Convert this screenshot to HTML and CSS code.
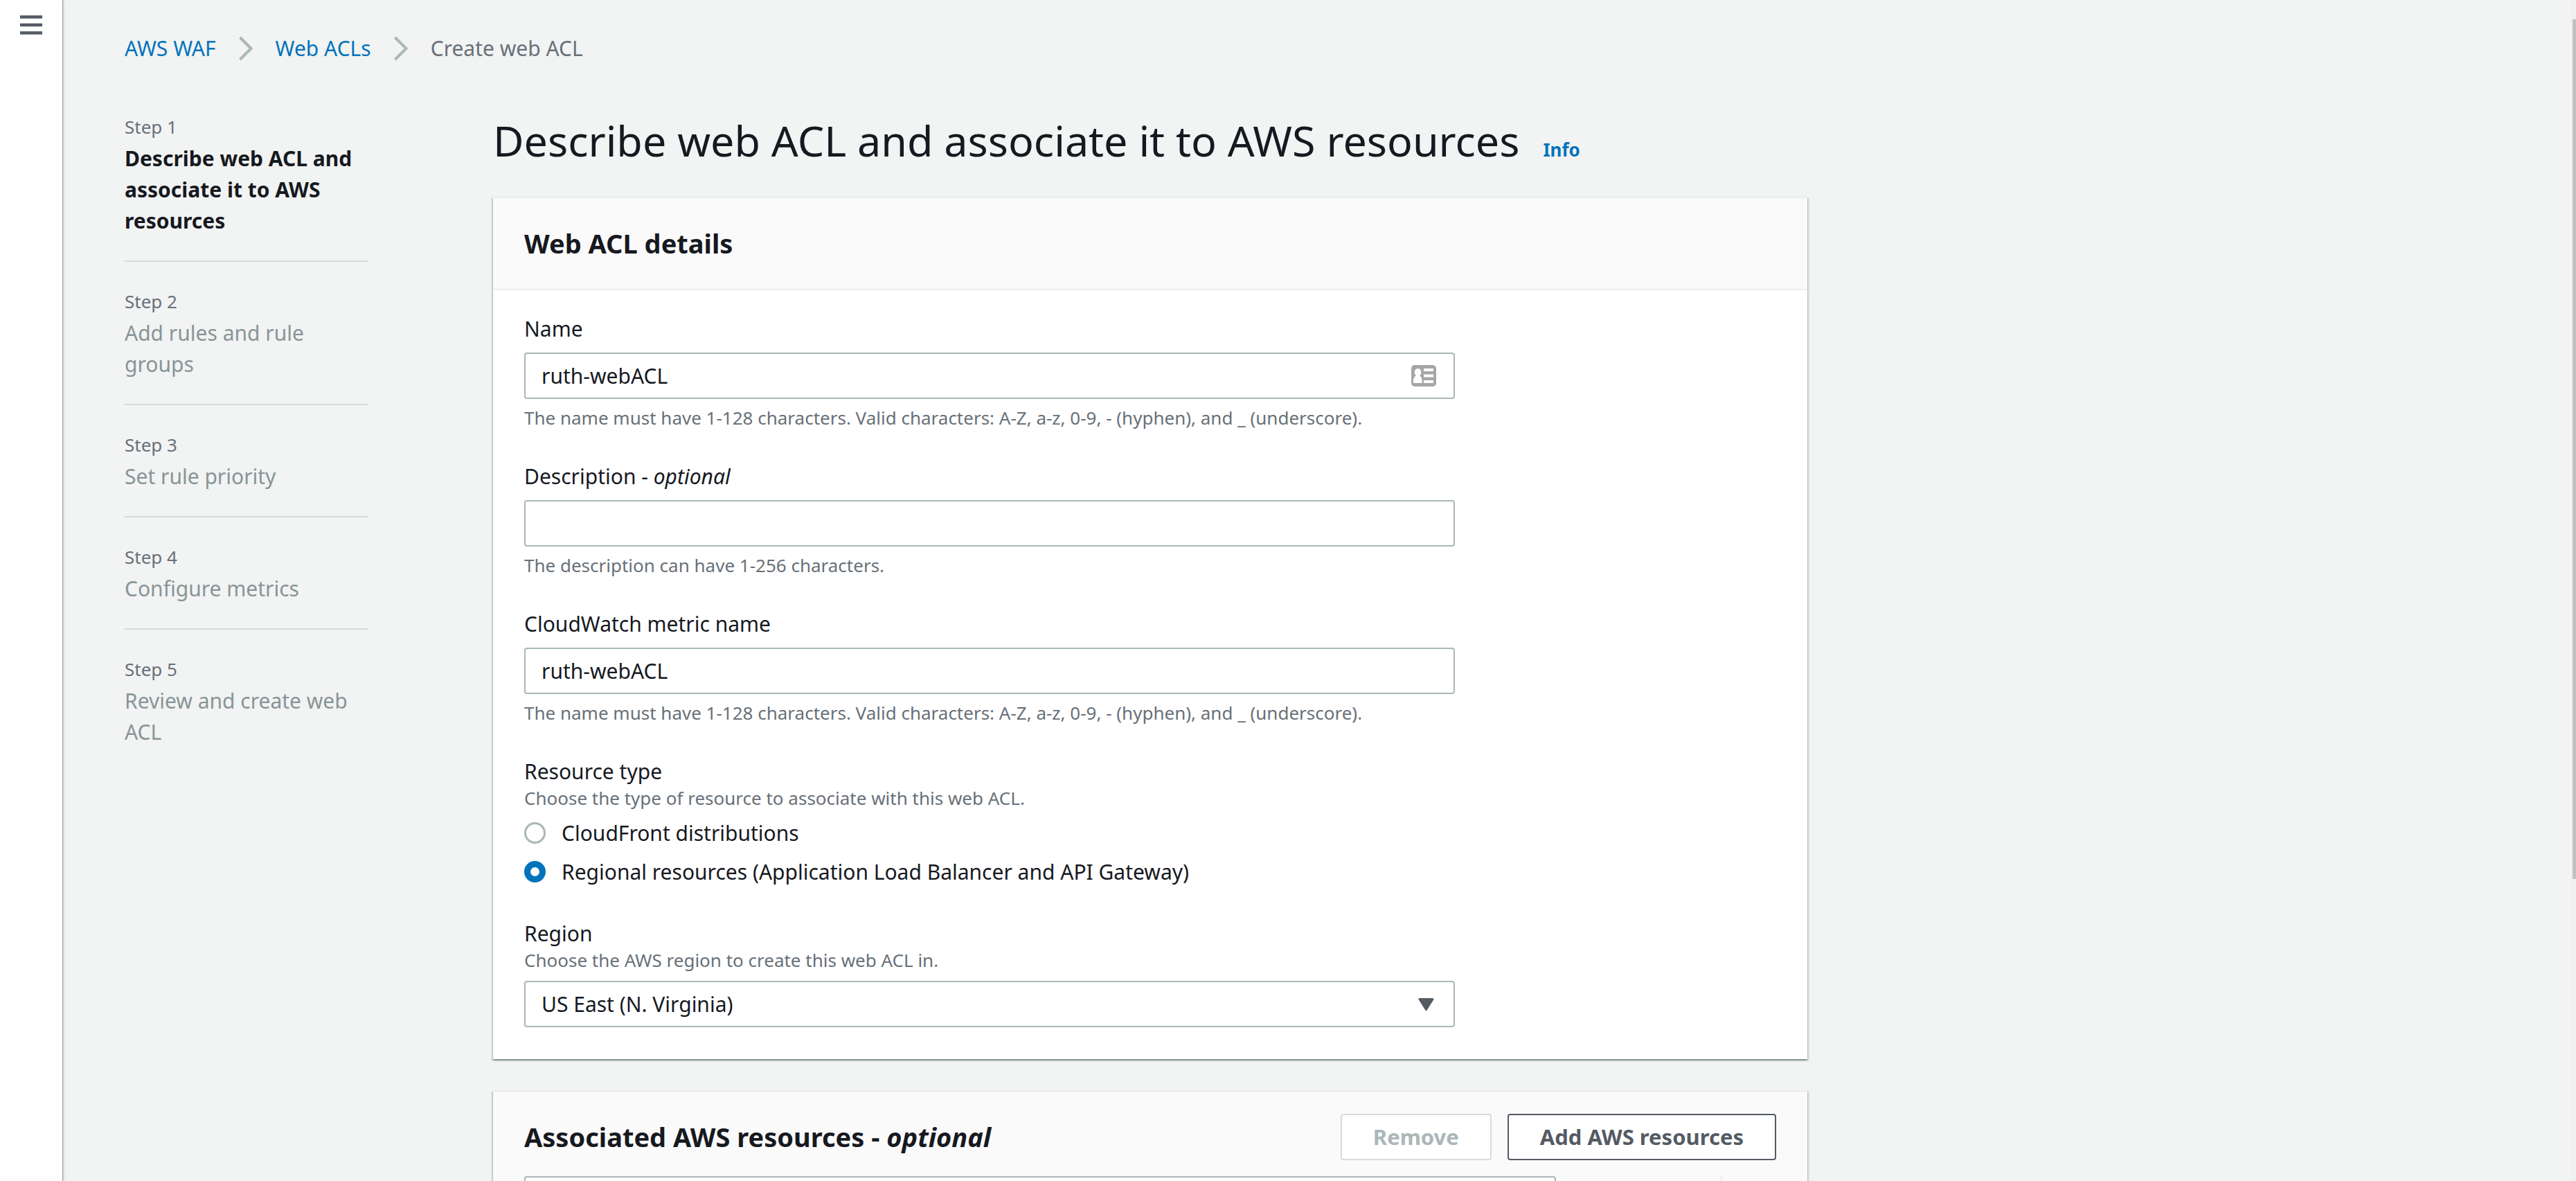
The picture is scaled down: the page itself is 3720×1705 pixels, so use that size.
FILE: index.html
```html
<!DOCTYPE html>
<html lang="en">
<head>
<meta charset="utf-8">
<title>Create web ACL</title>
<link rel="stylesheet" href="styles.css">
</head>
<body>
<div class="app">
  <aside class="rail">
    <button class="menu-button" type="button" aria-label="Open navigation">
      <svg width="32" height="30" viewBox="0 0 32 30" aria-hidden="true"><path d="M0 3.500h32M0 15h32M0 26.500h32" stroke="#545b64" stroke-width="4.6"/></svg>
    </button>
  </aside>

  <div class="content">
    <nav class="breadcrumb" aria-label="Breadcrumb">
      <a href="#">AWS WAF</a>
      <svg class="chevron" width="22" height="36" viewBox="0 0 22 36" aria-hidden="true"><path d="M2.500 2L18.500 18L2.500 34"/></svg>
      <a href="#">Web ACLs</a>
      <svg class="chevron" width="22" height="36" viewBox="0 0 22 36" aria-hidden="true"><path d="M2.500 2L18.500 18L2.500 34"/></svg>
      <span>Create web ACL</span>
    </nav>

    <div class="columns">
      <ol class="steps">
        <li class="step step-active"><span class="step-label">Step 1</span><span class="step-title">Describe web ACL and associate it to AWS resources</span></li>
        <li class="step"><span class="step-label">Step 2</span><span class="step-title">Add rules and rule groups</span></li>
        <li class="step"><span class="step-label">Step 3</span><span class="step-title">Set rule priority</span></li>
        <li class="step"><span class="step-label">Step 4</span><span class="step-title">Configure metrics</span></li>
        <li class="step"><span class="step-label">Step 5</span><span class="step-title">Review and create web ACL</span></li>
      </ol>

      <main class="main">
        <header class="page-header">
          <h1>Describe web ACL and associate it to AWS resources</h1>
          <a class="info" href="#">Info</a>
        </header>

        <section class="card">
          <div class="card-header"><h2>Web ACL details</h2></div>
          <form class="card-body">
            <div class="field">
              <label class="label" for="name">Name</label>
              <div class="control">
                <input class="input" id="name" type="text" value="ruth-webACL">
                <svg class="contact-icon" width="36" height="31" viewBox="0 0 36 31" aria-hidden="true">
                  <rect width="36" height="31" rx="5" fill="#a6a6a6"/>
                  <ellipse cx="9.500" cy="10.500" rx="4.800" ry="5.500" fill="#fff"/>
                  <path d="M3 26v-3c0-4 2-7 4.500-8h4c2.500 1 4 4 4 8v3z" fill="#fff"/>
                  <path d="M18 7h14M18 15.500h14M18 24h14" stroke="#fff" stroke-width="4"/>
                </svg>
              </div>
              <p class="hint">The name must have 1-128 characters. Valid characters: A-Z, a-z, 0-9, - (hyphen), and _ (underscore).</p>
            </div>
            <div class="field">
              <label class="label" for="description">Description - <i>optional</i></label>
              <div class="control"><input class="input" id="description" type="text"></div>
              <p class="hint">The description can have 1-256 characters.</p>
            </div>
            <div class="field">
              <label class="label" for="metric">CloudWatch metric name</label>
              <div class="control"><input class="input" id="metric" type="text" value="ruth-webACL"></div>
              <p class="hint">The name must have 1-128 characters. Valid characters: A-Z, a-z, 0-9, - (hyphen), and _ (underscore).</p>
            </div>
            <fieldset class="field">
              <legend class="label">Resource type</legend>
              <p class="description">Choose the type of resource to associate with this web ACL.</p>
              <div class="radios">
                <label class="radio"><input type="radio" name="resource-type">CloudFront distributions</label>
                <label class="radio"><input type="radio" name="resource-type" checked>Regional resources (Application Load Balancer and API Gateway)</label>
              </div>
            </fieldset>
            <div class="field">
              <label class="label" for="region">Region</label>
              <p class="description">Choose the AWS region to create this web ACL in.</p>
              <div class="control control-select">
                <select class="input" id="region"><option>US East (N. Virginia)</option></select>
                <svg class="caret" width="23" height="18" viewBox="0 0 23 18" aria-hidden="true"><path d="M2 1.500h19L11.500 16.500z" fill="#545b64" stroke="#545b64" stroke-width="3" stroke-linejoin="round"/></svg>
              </div>
            </div>
          </form>
        </section>

        <section class="card">
          <div class="card-header card-header-tools">
            <h2>Associated AWS resources - <i>optional</i></h2>
            <div class="actions">
              <button class="button" type="button" disabled>Remove</button>
              <button class="button" type="button">Add AWS resources</button>
            </div>
          </div>
          <div class="toolbar">
            <input class="input search" type="search" aria-label="Find resources">
            <div class="preferences"></div>
          </div>
        </section>
      </main>
    </div>
  </div>
  <div class="scrollbar"><div class="thumb"></div></div>
</div>
</body>
</html>
```
FILE: styles.css
```css
* { box-sizing: border-box; }

body {
  margin: 0;
  background: #f2f3f3;
  color: #16191f;
  font: 30px/45px "Noto Sans", "Open Sans", sans-serif;
}

h1, h2, p, ol, fieldset, legend { margin: 0; padding: 0; border: 0; }
input, select, button { font: inherit; color: inherit; }
a { color: #0073bb; text-decoration: none; }

.app {
  display: flex;
  height: 100vh;
  overflow: hidden;
}

.rail {
  flex: 0 0 90px;
  padding: 21px 0 0 29px;
  background: #fff;
  box-shadow: 1px 0 1px #98a5a6, 2px 0 3px rgba(0, 28, 36, 0.15);
}
.menu-button {
  display: block;
  padding: 0;
  border: 0;
  background: none;
}
.menu-button svg { display: block; }

.content {
  flex: 1;
  min-width: 0;
  padding: 47px 90px 0;
}

.breadcrumb {
  display: flex;
  align-items: center;
  gap: 32px;
  color: #687078;
}
.chevron {
  fill: none;
  stroke: #aab7b8;
  stroke-width: 4;
}

.columns {
  display: grid;
  grid-template-columns: 352px minmax(0, 1898px);
  gap: 180px;
  padding-top: 73px;
}

.steps { list-style: none; }
.step {
  padding: 39px 0 35px;
  border-bottom: 2px solid #d5dbdb;
  color: #879596;
}
.step:first-child { padding-top: 0; }
.step:last-child { border-bottom: 0; }
.step-label {
  display: block;
  margin-bottom: 5px;
  color: #687078;
  font-size: 26px;
  line-height: 36px;
}
.step-title { display: block; }
.step-active .step-title { color: #16191f; font-weight: 700; }

.page-header {
  display: flex;
  align-items: baseline;
  gap: 34px;
  margin-bottom: 43px;
}
h1 {
  font-size: 61px;
  font-weight: 400;
  line-height: 76px;
}
.info { font-size: 26px; font-weight: 700; }

.card {
  margin-bottom: 45px;
  border-top: 2px solid #eaeded;
  background: #fff;
  box-shadow: 0 2px 2px rgba(0, 28, 36, 0.3), 2px 2px 2px rgba(0, 28, 36, 0.15), -2px 2px 2px rgba(0, 28, 36, 0.15);
}
.card-header {
  display: flex;
  align-items: center;
  justify-content: space-between;
  min-height: 133px;
  padding: 32px 45px;
  border-bottom: 2px solid #eaeded;
  background: #fafafa;
}
h2 {
  font-size: 38px;
  font-weight: 700;
  line-height: 47px;
}
.card-header-tools {
  min-height: 0;
  padding-bottom: 23px;
  border-bottom: 0;
}

.card-body {
  display: flex;
  flex-direction: column;
  gap: 46px;
  padding: 35px 45px 46px;
}
.field { max-width: 1344px; min-width: 0; }
.label { display: block; line-height: 41px; }
.description, .hint {
  color: #687078;
  font-size: 26px;
  line-height: 36px;
}
.control { position: relative; margin: 14px 0 9px; }
.control-select { margin: 12px 0 0; }
.input {
  display: block;
  width: 100%;
  height: 67px;
  padding: 0 23px;
  border: 2px solid #aab7b8;
  border-radius: 4px;
  background: #fff;
  appearance: none;
}
.contact-icon { position: absolute; top: 18px; right: 27px; }
.caret { position: absolute; top: 25px; right: 30px; }

.radios {
  display: flex;
  flex-direction: column;
  gap: 11px;
  padding-top: 10px;
}
.radio {
  display: flex;
  align-items: center;
  gap: 23px;
}
.radio input {
  width: 31px;
  height: 31px;
  margin: 0;
  border: 3px solid #aab7b8;
  border-radius: 50%;
  background: #fff;
  appearance: none;
}
.radio input:checked { border: 9px solid #0073bb; }

.actions { display: flex; gap: 23px; }
.button {
  height: 67px;
  padding: 0 45px;
  border: 2px solid #545b64;
  border-radius: 4px;
  background: #fff;
  color: #545b64;
  font-size: 31px;
  font-weight: 700;
}
.button:disabled { border-color: #d5dbdb; color: #aab7b8; }

.toolbar {
  display: flex;
  justify-content: space-between;
  padding: 0 45px 45px;
  background: #fafafa;
}
.search { max-width: 1490px; }
.preferences {
  flex: 0 0 80px;
  border-left: 2px solid #eaeded;
}

.scrollbar {
  flex: 0 0 7px;
  padding: 28px 0 0 2px;
  background: #f0f0f0;
}
.thumb { height: 74%; background: #c1c1c1; }
```
